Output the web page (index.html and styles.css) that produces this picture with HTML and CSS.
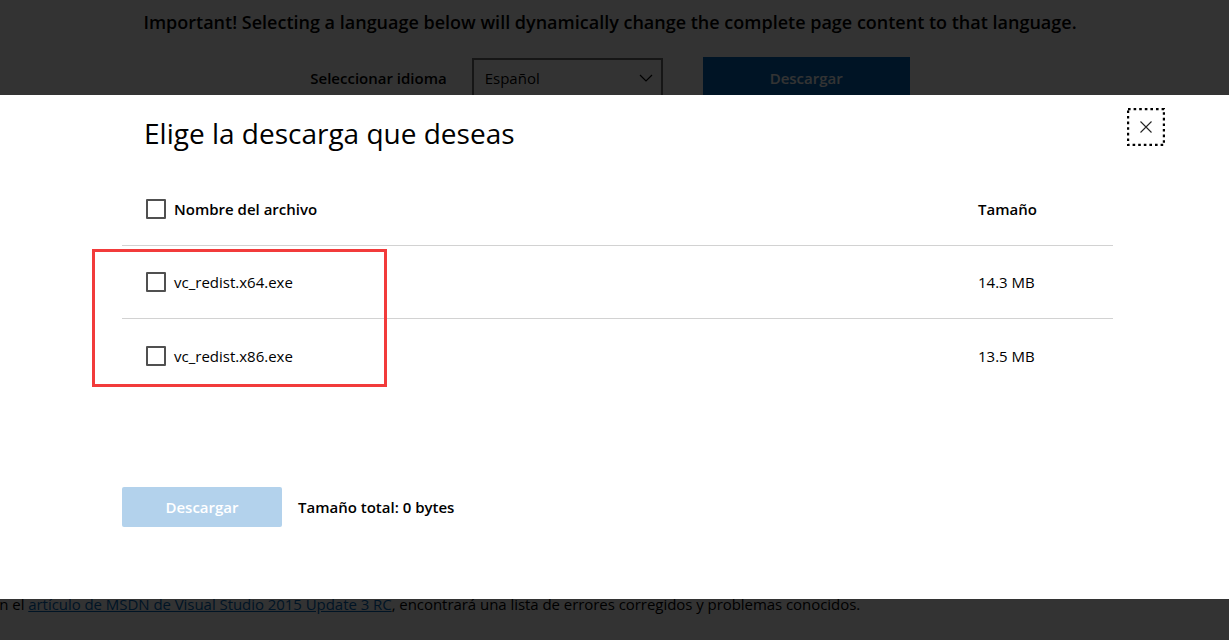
FILE: index.html
```html
<!DOCTYPE html>
<html lang="es">
<head>
<meta charset="utf-8">
<title>Elige la descarga que deseas</title>
<link rel="stylesheet" href="styles.css">
</head>
<body>
<div class="page">
  <p class="notice">Important! Selecting a language below will dynamically change the complete page content to that language.</p>
  <div class="lang-row">
    <span class="lang-label">Seleccionar idioma</span>
    <div class="select">
      <span>Español</span>
      <svg class="chev" width="14" height="8" viewBox="0 0 14 8"><path d="M1 1l6 6 6-6" fill="none" stroke="#000" stroke-width="1.2"/></svg>
    </div>
    <button class="page-btn">Descargar</button>
  </div>
  <p class="details">En el <a href="#">artículo de MSDN de Visual Studio 2015 Update 3 RC</a>, encontrará una lista de errores corregidos y problemas conocidos.</p>
</div>

<div class="overlay"></div>

<div class="modal">
  <button class="close" aria-label="Cerrar">
    <svg width="38" height="38" viewBox="0 0 38 38">
      <rect x="1" y="1" width="36" height="36" fill="none" stroke="#000" stroke-width="2.4" stroke-dasharray="2.6 3"/>
      <path d="M13.5 13.5l11 11M24.5 13.5l-11 11" stroke="#222" stroke-width="1.1" fill="none"/>
    </svg>
  </button>
  <h1 class="title">Elige la descarga que deseas</h1>
  <div class="table">
    <div class="row head">
      <label class="cell-name"><span class="box"></span>Nombre del archivo</label>
      <span class="cell-size">Tamaño</span>
    </div>
    <div class="row">
      <label class="cell-name"><span class="box"></span>vc_redist.x64.exe</label>
      <span class="cell-size">14.3 MB</span>
    </div>
    <div class="row last">
      <label class="cell-name"><span class="box"></span>vc_redist.x86.exe</label>
      <span class="cell-size">13.5 MB</span>
    </div>
  </div>
  <div class="footer">
    <button class="dl-btn" disabled>Descargar</button>
    <span class="total">Tamaño total: 0 bytes</span>
  </div>
  <div class="highlight"></div>
</div>
</body>
</html>
```
FILE: styles.css
```css
* { box-sizing: border-box; }
html, body { margin: 0; padding: 0; }
body {
  background: #fff;
  color: #000;
  font-family: "Open Sans", "Noto Sans", sans-serif;
  overflow: hidden;
  height: 640px;
}
.page {
  padding-right: 9px;
}
.notice {
  margin: 0;
  padding-top: 10px;
  text-align: center;
  font-size: 18px;
  line-height: 24px;
  font-weight: 600;
}
.lang-row {
  display: flex;
  justify-content: center;
  align-items: center;
  margin-top: 23px;
  gap: 0;
}
.lang-label {
  font-size: 15px;
  font-weight: 600;
  margin-right: 25px;
}
.select {
  width: 191px;
  height: 40px;
  border: 2px solid #707070;
  display: flex;
  align-items: center;
  justify-content: space-between;
  padding: 0 8px 0 11px;
  font-size: 15px;
  margin-right: 40px;
}
.page-btn {
  width: 207px;
  height: 42px;
  border: 0;
  background: #0067b8;
  color: #fff;
  font-family: inherit;
  font-size: 15px;
  font-weight: 600;
}
.details {
  margin: 494px 0 0 -9px;
  font-size: 15px;
  line-height: 22px;
  letter-spacing: -0.05px;
  white-space: nowrap;
}
.details a { color: #0067b8; }

.overlay {
  position: fixed;
  inset: 0;
  background: rgba(0, 0, 0, 0.8);
}

.modal {
  position: fixed;
  left: 0;
  right: 0;
  top: 95px;
  height: 504px;
  background: #fff;
  padding: 20px 0 0 122px;
}
.close {
  position: absolute;
  top: 13px;
  right: 64px;
  width: 38px;
  height: 38px;
  padding: 0;
  border: 0;
  background: transparent;
}
.close svg { display: block; }
.title {
  margin: 0 0 0 22px;
  font-size: 28px;
  line-height: 36px;
  font-weight: 400;
}
.table {
  width: 991px;
  margin-top: 22px;
}
.row {
  display: grid;
  grid-template-columns: 1fr 135px;
  align-items: center;
  height: 73px;
  border-bottom: 1px solid #d2d2d2;
  font-size: 15px;
}
.row.last { border-bottom: 0; }
.row.head { font-weight: 600; }
.cell-name {
  display: flex;
  align-items: center;
  padding-left: 24px;
}
.box {
  width: 20px;
  height: 20px;
  border: 2px solid #505050;
  border-radius: 1px;
  margin-right: 8px;
}
.footer {
  display: flex;
  align-items: center;
  margin-top: 95px;
}
.dl-btn {
  width: 160px;
  height: 40px;
  border: 0;
  border-radius: 2px;
  background: #b3d2ec;
  color: #fff;
  font-family: inherit;
  font-size: 15px;
  font-weight: 600;
}
.total {
  margin-left: 16px;
  font-size: 15px;
  font-weight: 600;
}
.highlight {
  position: absolute;
  left: 92px;
  top: 154px;
  width: 295px;
  height: 138px;
  border: 3px solid #f23b3b;
}
```
